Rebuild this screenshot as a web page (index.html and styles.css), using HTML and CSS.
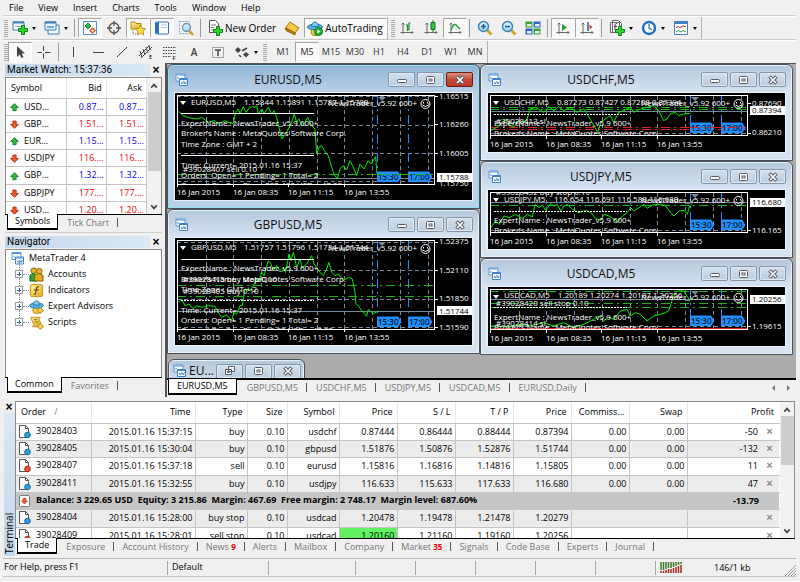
FILE: index.html
```html
<!DOCTYPE html>
<html lang="en">
<head>
<meta charset="utf-8">
<title>MetaTrader 4</title>
<link rel="stylesheet" href="styles.css">
</head>
<body>
<svg class="defs" aria-hidden="true">
  <defs>
    <linearGradient id="gold" x1="0" y1="0" x2="1" y2="1"><stop offset="0" stop-color="#fff3a0"/><stop offset="1" stop-color="#e0a818"/></linearGradient>
    <linearGradient id="lens" x1="0" y1="0" x2="0" y2="1"><stop offset="0" stop-color="#eaf6ff"/><stop offset="1" stop-color="#9fcdf0"/></linearGradient>
    <symbol id="i-plus" viewBox="0 0 10 10"><path d="M3.5.5h3v3h3v3h-3v3h-3v-3h-3v-3h3z" fill="#2fd42f" stroke="#0b8a12"/></symbol>
    <symbol id="i-up" viewBox="0 0 10 10"><path d="M5 .7 9.3 5H6.8v3.5H3.2V5H.7z" fill="#35b84a" stroke="#137a25"/></symbol>
    <symbol id="i-down" viewBox="0 0 10 10"><path d="M5 9.3 9.3 5H6.8V1.2H3.2V5H.7z" fill="#ee5a2c" stroke="#a92c0c"/></symbol>
    <symbol id="i-chart" viewBox="0 0 14 14"><path d="M1 1h9v7H1z" fill="#fff" stroke="#5a96d8"/><path d="M1 2h9" stroke="#5a96d8"/><path d="M4.5 5.500h8v7h-8z" fill="#fff" stroke="#3f82cf"/><path d="M4.500 6.500h8" stroke="#3f82cf"/><path d="M6 9l1.300 2 1.500-2.500 1.200 2.500L11.500 8.500M3 4v2" stroke="#3f82cf" fill="none"/></symbol>
    <symbol id="i-doc-buy" viewBox="0 0 14 14"><path d="M1.500.5h6l3 3v9h-9z" fill="#fff" stroke="#555"/><path d="M7.500.5v3h3" fill="none" stroke="#555"/><circle cx="9.500" cy="10" r="2.800" fill="#2ea0e6" stroke="#12659c"/></symbol>
    <symbol id="i-doc-sell" viewBox="0 0 14 14"><path d="M1.500.5h6l3 3v9h-9z" fill="#fff" stroke="#555"/><path d="M7.500.5v3h3" fill="none" stroke="#555"/><circle cx="9.500" cy="10" r="2.800" fill="#e8502a" stroke="#96280c"/></symbol>
    <symbol id="i-axes" viewBox="0 0 16 16"><path d="M4 3v11M1.500 12.500H14M2.500 4.500 4 3l1.500 1.500M12.500 11 14 12.500 12.500 14" fill="none" stroke="#666"/></symbol>
    <symbol id="i-hat" viewBox="0 0 16 16"><ellipse cx="8" cy="12" rx="4" ry="3.500" fill="#f3cf4b" stroke="#a87f10"/><ellipse cx="8" cy="7" rx="7.500" ry="2.800" fill="#5bb1e0" stroke="#2475a8"/><path d="M4.500 6.500Q5 2 8 2t3.500 4.500z" fill="#7cc8ee" stroke="#2475a8"/></symbol>
    <symbol id="i-grid" viewBox="0 0 297 95">
      <path d="M31.500 3v90M58.500 3v90M86.500 3v90M114.500 3v90M142.500 3v90M169.500 3v90M197.500 3v90M225.500 3v90M253.500 3v90" stroke="#778899" stroke-dasharray="4 3"/>
    </symbol>
    <symbol id="i-flags" viewBox="0 0 60 12">
      <path d="M0 .5h21l3.500 5.500-3.500 5H0zM31 .5h21l3.500 5.500-3.500 5H31z" fill="#1e90ff"/>
      <text x="1" y="9" class="flag">15:30</text><text x="32" y="9" class="flag">17:00</text>
    </symbol>
    <symbol id="i-head" viewBox="0 0 297 20">
      <path d="M5 8h6l-3 4z" fill="#fff"/><path d="M203 4h8l-4 4z" fill="#778899"/>
      <text x="153" y="13" class="lbl">NewsTrader_v5.92 600+</text>
      <circle cx="250.500" cy="11" r="4.500" fill="none" stroke="#fff"/><path d="M248.500 9v1.500M252.500 9v1.500M247.500 12q3 3 6 0" fill="none" stroke="#fff"/>
    </symbol>
    <symbol id="i-dates" viewBox="0 0 297 20">
      <path d="M2.500 0v3M58.500 0v3M113.500 0v3M169.500 0v3" stroke="#fff"/>
      <text x="2" y="11" class="lbl">16 Jan 2015</text><text x="58" y="11" class="lbl">16 Jan 08:35</text><text x="113" y="11" class="lbl">16 Jan 11:15</text><text x="169" y="11" class="lbl">16 Jan 13:55</text>
    </symbol>
    <clipPath id="clip-tall"><path d="M0 2h260v89H0z"/></clipPath>
    <clipPath id="clip-short"><path d="M0 2h260v41H0z"/></clipPath>
    <symbol id="i-min" viewBox="0 0 12 10"><rect x="1.500" y="4.500" width="9" height="3" rx="1" fill="#fff" stroke="#555a68"/></symbol>
    <symbol id="i-max" viewBox="0 0 12 10"><rect x="1.500" y="1.500" width="8" height="7" rx="1" fill="#fff" stroke="#555a68"/><rect x="4" y="4" width="3" height="2" fill="#fff" stroke="#555a68"/></symbol>
    <symbol id="i-close" viewBox="0 0 12 10"><path d="M2.500 1.500 9.500 8.500M9.500 1.500 2.500 8.500" stroke="#555a68" stroke-width="3.600"/><path d="M3 2 9 8M9 2 3 8" stroke="#fff" stroke-width="1.700"/></symbol>
  </defs>
</svg>

<div class="app">
  <nav class="menu">
    <button>File</button><button>View</button><button>Insert</button><button>Charts</button><button>Tools</button><button>Window</button><button>Help</button>
  </nav>

  <div class="bar bar-main">
    <span class="grip"></span>
    <button class="tb wide" aria-label="New chart"><svg viewBox="0 0 16 16"><path d="M1 2h11v8H1z" fill="#fff" stroke="#3c7cba"/><path d="M1 2.500h11" stroke="#3c7cba" stroke-width="2"/><path d="M3 6.500h7" stroke="#78a8d8"/><use href="#i-plus" x="6" y="5" width="10" height="10"/></svg><i class="caret"></i></button>
    <button class="tb wide" aria-label="Profiles"><svg viewBox="0 0 16 16"><path d="M4 5h11v9H4z" fill="#fff" stroke="#3c7cba"/><path d="M1 2h11v8H1z" fill="#eaf3fc" stroke="#3c7cba"/><path d="M1 2.500h11" stroke="#3c7cba" stroke-width="2"/><path d="M3 7h7" stroke="#78a8d8" stroke-width="2"/></svg><i class="caret"></i></button>
    <span class="sep"></span>
    <button class="tb on" aria-label="Market Watch"><svg viewBox="0 0 16 16"><path d="M1.500 1.500h13v13h-13z" fill="#fff" stroke="#4d94d6"/><path d="m6 3 3 3-3 3-3-3z" fill="#3bb64c" stroke="#1b7c2b"/><path d="m10.500 8 2.500 2.500-2.500 2.500L8 10.500z" fill="#fff" stroke="#e0582c" stroke-width="1.500"/></svg></button>
    <button class="tb" aria-label="Data Window"><svg viewBox="0 0 16 16"><circle cx="8" cy="8" r="5" fill="none" stroke="#555" stroke-width="1.400"/><path d="M8 1v5M8 10v5M1 8h5M10 8h5" stroke="#555" stroke-width="1.300"/></svg></button>
    <button class="tb on" aria-label="Navigator"><svg viewBox="0 0 16 16"><path d="M1 2h4l1 1.500h5V9H1z" fill="url(#gold)" stroke="#b98c17"/><path d="M3 10v4h3" fill="none" stroke="#777" stroke-dasharray="1 1"/><path d="m10.500 5 1.600 3.300 3.600.5-2.600 2.500.6 3.600-3.200-1.700-3.200 1.700.6-3.600L5.300 8.800l3.600-.5z" fill="#ffdc45" stroke="#a97c10" stroke-width=".8"/></svg></button>
    <button class="tb on" aria-label="Terminal"><svg viewBox="0 0 16 16"><rect x="1.500" y="2" width="13" height="12" rx="1" fill="#fff" stroke="#2a72bf"/><path d="M2 2.500h3v11H2z" fill="#2a72bf"/><path d="M7 5h6M7 7.500h6" stroke="#a9c8e8"/></svg></button>
    <button class="tb" aria-label="Strategy Tester"><svg viewBox="0 0 16 16"><path d="M1.500 1.500h10v12h-10z" fill="#f4f8fc" stroke="#8ca5bd" stroke-dasharray="2 1"/><circle cx="8.500" cy="7.500" r="4" fill="url(#lens)" stroke="#6d8da9" stroke-width="1.300"/><path d="m11.500 11 3.500 4" stroke="#d79a20" stroke-width="2.500"/></svg></button>
    <span class="sep"></span>
    <button class="tb text"><svg viewBox="0 0 16 16"><path d="M2.500.5h6l3 3v9h-9z" fill="#fff" stroke="#555"/><path d="M4 5h5M4 7.500h3M4 10h3" stroke="#777"/><use href="#i-plus" x="6" y="6" width="10" height="10"/></svg>New Order</button>
    <button class="tb" aria-label="MetaEditor"><svg viewBox="0 0 16 16"><path d="m6 2 9 6-4 5-9.500-5z" fill="#f5c945" stroke="#a8740f"/><path d="m1.500 8 .5 2.500L11 15v-2z" fill="#c98a14" stroke="#8e5f09"/></svg></button>
    <button class="tb text on"><svg viewBox="0 0 16 16"><use href="#i-hat" width="16" height="16"/><circle cx="11.500" cy="11.500" r="4" fill="#1fb52c" stroke="#0a7a16"/><path d="M10.300 9.500v4l3.200-2z" fill="#fff"/></svg>AutoTrading</button>
    <span class="edge"></span><span class="grip"></span>
    <button class="tb" aria-label="Bar chart"><svg viewBox="0 0 16 16"><use href="#i-axes" width="16" height="16"/><path d="M8.500 11V5H7M8.500 9.500H10V3h1.500" fill="none" stroke="#1d8d2c" stroke-width="1.200"/></svg></button>
    <button class="tb" aria-label="Candlesticks"><svg viewBox="0 0 16 16"><use href="#i-axes" width="16" height="16"/><path d="M10 0v12" stroke="#167421"/><path d="M8 2.500h4v7H8z" fill="#35c648" stroke="#167421"/></svg></button>
    <button class="tb on" aria-label="Line chart"><svg viewBox="0 0 16 16"><use href="#i-axes" width="16" height="16"/><path d="M4 10q3-8 5.500-4.500L13 9" fill="none" stroke="#1d9a2e" stroke-width="1.300"/></svg></button>
    <span class="sep"></span>
    <button class="tb" aria-label="Zoom in"><svg viewBox="0 0 16 16"><path d="m10 10 4.500 4.500" stroke="#d9a32c" stroke-width="3"/><circle cx="6.500" cy="6.500" r="5" fill="url(#lens)" stroke="#3a83bd" stroke-width="1.500"/><path d="M4 6.500h5M6.500 4v5" stroke="#1c5f9c" stroke-width="1.600"/></svg></button>
    <button class="tb" aria-label="Zoom out"><svg viewBox="0 0 16 16"><path d="m10 10 4.500 4.500" stroke="#d9a32c" stroke-width="3"/><circle cx="6.500" cy="6.500" r="5" fill="url(#lens)" stroke="#3a83bd" stroke-width="1.500"/><path d="M4 6.500h5" stroke="#1c5f9c" stroke-width="1.600"/></svg></button>
    <button class="tb" aria-label="Tile windows"><svg viewBox="0 0 16 16"><path d="M.5 1.500h7v6h-7zM8.500 8.500h7v6h-7z" fill="#3ba33b"/><path d="M8.500 1.500h7v6h-7zM.5 8.500h7v6h-7z" fill="#2c63c8"/><path d="M2 4h4.500v2.500H2zM10 4h4.500v2.500H10zM2 11h4.500v2.500H2zM10 11h4.500v2.500H10z" fill="#e6f2e6"/></svg></button>
    <span class="sep"></span>
    <button class="tb on" aria-label="Auto scroll"><svg viewBox="0 0 16 16"><use href="#i-axes" width="16" height="16"/><path d="m7 4 5 3.500L7 11z" fill="#22a533"/></svg></button>
    <button class="tb on" aria-label="Chart shift"><svg viewBox="0 0 16 16"><use href="#i-axes" width="16" height="16"/><path d="M9 2v9" stroke="#1d5f9e" stroke-width="1.500"/><path d="m13.500 7-3-2.500v5z" fill="#d04a20"/></svg></button>
    <span class="sep"></span>
    <button class="tb wide" aria-label="Indicators"><svg viewBox="0 0 16 16"><path d="M1.500 2.500h9v10h-9zM3.500.5h6l3 3v9h-9z" fill="#fff" stroke="#666"/><path d="M6 10V5q0-1.500 2-1.500M5 6.500h3" fill="none" stroke="#444"/><use href="#i-plus" x="6" y="6" width="10" height="10"/></svg><i class="caret"></i></button>
    <button class="tb wide" aria-label="Periods"><svg viewBox="0 0 16 16"><circle cx="8" cy="8" r="6" fill="#f4faff" stroke="#1d6fc4" stroke-width="2.400"/><path d="M8 4v4.500l3 1" fill="none" stroke="#345"/></svg><i class="caret"></i></button>
    <button class="tb wide" aria-label="Templates"><svg viewBox="0 0 16 16"><path d="M1.500 1.500h13v13h-13z" fill="#fff" stroke="#3f82c9"/><path d="M2 3h12" stroke="#3f82c9" stroke-width="2"/><path d="m3 7.500 2-1 2 1 3-1.500 3 .5" fill="none" stroke="#a33"/><path d="m3 12 2.500-1.500L8 12l2-1.500 3 1.500" fill="none" stroke="#2a8c35"/></svg><i class="caret"></i></button>
    <span class="edge"></span>
  </div>

  <div class="bar bar-draw">
    <span class="grip"></span>
    <button class="tb on" aria-label="Cursor"><svg viewBox="0 0 16 16"><path d="M5 2v11l2.700-2.500L9.500 14l2-1-1.800-3.500H13z" fill="#444"/></svg></button>
    <button class="tb" aria-label="Crosshair"><svg viewBox="0 0 16 16"><path d="M7.500 2v5M7.500 9.500v5M1.500 8.500H6M9 8.500h5.500" stroke="#444"/></svg></button>
    <span class="sep"></span>
    <button class="tb" aria-label="Vertical line"><svg viewBox="0 0 16 16"><path d="M7.500 3v10" stroke="#444"/></svg></button>
    <button class="tb" aria-label="Horizontal line"><svg viewBox="0 0 16 16"><path d="M3 8.500h11" stroke="#444"/></svg></button>
    <button class="tb" aria-label="Trend line"><svg viewBox="0 0 16 16"><path d="m3 13 10-10" stroke="#444"/></svg></button>
    <button class="tb" aria-label="Channel"><svg viewBox="0 0 16 16"><path d="M1 12 11 2M3 14 14 3M2 7l2 6M5 5l2 6M8 3l2 6M11 1l1 5" fill="none" stroke="#444"/><text x="11" y="15" class="tiny">E</text></svg></button>
    <button class="tb" aria-label="Fibonacci"><svg viewBox="0 0 16 16"><path d="M1 3.500h13M1 6.500h13M1 9.500h13M1 12.500h8" stroke="#444" stroke-dasharray="1.500 1"/><text x="10.500" y="15.500" class="tiny">F</text></svg></button>
    <button class="tb letter">A</button>
    <button class="tb" aria-label="Text label"><svg viewBox="0 0 16 16"><path d="M2.500 3.500h11v10h-11z" fill="none" stroke="#555" stroke-dasharray="1 1"/><path d="M5 6h6M8 6v6" stroke="#444" stroke-width="1.500"/></svg></button>
    <button class="tb wide" aria-label="Arrows"><svg viewBox="0 0 16 16"><path d="m4 3 3 3-3 3-3-3zM12 8l3 2.500-3 3-3-3z" fill="#444"/><path d="m5 11 2 2M8 7l5-3" stroke="#444" stroke-width="1.500"/></svg><i class="caret"></i></button>
    <span class="grip grip-per"></span>
    <button class="tb per">M1</button><button class="tb per on">M5</button><button class="tb per">M15</button><button class="tb per">M30</button><button class="tb per">H1</button><button class="tb per">H4</button><button class="tb per">D1</button><button class="tb per">W1</button><button class="tb per">MN</button>
    <span class="edge"></span>
  </div>

  <div class="work">
    <aside class="side">
      <section class="panel">
        <header class="cap"><h2>Market Watch: 15:37:36</h2><button aria-label="Close Market Watch">×</button></header>
        <div class="scrollbox watch">
          <div class="clip">
            <table class="quotes">
              <thead><tr><th>Symbol</th><th>Bid</th><th>Ask</th></tr></thead>
              <tbody>
                <tr class="up"><td><svg><use href="#i-up"/></svg>USD...</td><td>0.87...</td><td>0.87...</td></tr>
                <tr class="down"><td><svg><use href="#i-down"/></svg>GBP...</td><td>1.51...</td><td>1.51...</td></tr>
                <tr class="up"><td><svg><use href="#i-up"/></svg>EUR...</td><td>1.15...</td><td>1.15...</td></tr>
                <tr class="down"><td><svg><use href="#i-down"/></svg>USDJPY</td><td>116....</td><td>116....</td></tr>
                <tr class="up"><td><svg><use href="#i-up"/></svg>GBP...</td><td>1.32...</td><td>1.32...</td></tr>
                <tr class="down"><td><svg><use href="#i-down"/></svg>GBPJPY</td><td>177....</td><td>177....</td></tr>
                <tr class="down"><td><svg><use href="#i-down"/></svg>USD...</td><td>1.20...</td><td>1.20...</td></tr>
              </tbody>
            </table>
          </div>
          <div class="scroll"><i class="arr up-a"></i><i class="thumb"></i><i class="arr down-a"></i></div>
        </div>
        <div class="tabs"><button class="sel">Symbols</button><button>Tick Chart</button></div>
      </section>
      <section class="panel nav">
        <header class="cap"><h2>Navigator</h2><button aria-label="Close Navigator">×</button></header>
        <ul class="tree">
          <li class="root"><svg><use href="#i-chart"/></svg>MetaTrader 4</li>
          <li><i class="exp"></i><svg viewBox="0 0 16 16"><circle cx="5" cy="4" r="3" fill="#e8b52a" stroke="#7e5c08"/><circle cx="11" cy="4.500" r="3" fill="#e8b52a" stroke="#7e5c08"/><path d="M1 15V9q4-4 7 0v6z" fill="#25a935" stroke="#0c6b18"/><path d="M6 15V9q4-4 9 0v6z" fill="#e0aa22" stroke="#7e5c08"/></svg>Accounts</li>
          <li><i class="exp"></i><svg viewBox="0 0 16 16"><rect x="1.500" y="1.500" width="13" height="13" rx="1.500" fill="url(#gold)" stroke="#c1911c"/><path d="M10.500 4Q8.500 3.500 8 6l-1 5q-.5 1.500-2 1M5.500 7.500h5" fill="none" stroke="#5a4308" stroke-width="1.200"/></svg>Indicators</li>
          <li><i class="exp"></i><svg viewBox="0 0 16 16"><use href="#i-hat" width="16" height="16"/><path d="m12 9 3.500 3.300L12 15.500l-3.300-3.200z" fill="#f6cf48" stroke="#a97c10"/></svg>Expert Advisors</li>
          <li><i class="exp"></i><svg viewBox="0 0 16 16"><path d="M2 2.500h10q-2 2 0 5t-1 5H4q2-2 0-5t-2-5z" fill="url(#gold)" stroke="#b98c17"/><path d="M5 5h4M6 7.500h4" stroke="#8a6a12"/><path d="m12 9 3.500 3.300L12 15.500l-3.300-3.200z" fill="#f6cf48" stroke="#a97c10"/></svg>Scripts</li>
        </ul>
        <div class="tabs"><button class="sel">Common</button><button>Favorites</button></div>
      </section>
    </aside>

    <main class="mdi">
      <div class="desk">
        <div class="col">
          <section class="win active">
            <header class="title"><svg><use href="#i-chart"/></svg><h3>EURUSD,M5</h3><button aria-label="Minimize"><svg><use href="#i-min"/></svg></button><button aria-label="Maximize"><svg><use href="#i-max"/></svg></button><button class="x" aria-label="Close"><svg><use href="#i-close"/></svg></button></header>
            <svg class="chart tall" viewBox="0 0 297 107" preserveAspectRatio="xMinYMin slice">
              <use href="#i-grid" width="297" height="95"/>
              <path d="M2 3.500h258M2 32.500h258M2 60.500h258M2 88.500h258" class="grid"/>
              <path d="M202.500 3v88M233.500 3v88" class="session"/>
              <path d="M2 85.500h258" stroke="#778899"/><path d="M2 81.500h258" class="order"/>
              <g transform="translate(-10 -29) scale(.3333)"><polyline class="price" points="40,142 55,155 75,162 95,165 110,160 130,175 150,170 160,180 180,170 195,178 205,178 212,145 220,135 225,148 235,128 243,145 255,130 262,128 270,130 275,125 280,150 290,135 297,148 310,130 320,150 328,140 335,160 342,190 350,225 357,215 362,210 370,195 378,180 388,150 395,175 402,165 410,185 420,175 428,160 440,185 450,195 455,270 462,250 470,245 478,260 490,275 500,310 507,330 517,345 525,315 535,305 545,318 555,290 563,305 575,335 585,300 597,315 610,290 618,300 632,278 636,330"/></g>
              <path d="M6 20.500h133M6 62.500h133" stroke="#fff"/>
              <g class="lbl" clip-path="url(#clip-tall)"><text x="16" y="12">EURUSD,M5</text><text x="69" y="12">1.15844 1.15891 1.15787 1.15788</text><text x="6" y="33">ExpertName : NewsTrader_v5.9 600+</text><text x="6" y="43">Broker's Name :  MetaQuotes Software Corp.</text><text x="6" y="54">Time Zone : GMT + 2</text><text x="6" y="75">Time: Current= 2015.01.16 15:37</text><text x="8" y="79">#39028407 sell 0.10</text><text x="6" y="85">Orders: Open= 1 Pending= 1 Total= 2</text><text x="6" y="95">Current Pip Cur. Pips= 282.460 USD = 47.38</text></g>
              <use href="#i-flags" x="202" y="78" width="60" height="12"/>
              <path d="M202 81.500h58" class="order"/>
              <use href="#i-head" width="297" height="20"/>
              <rect x="2.500" y="2.500" width="257" height="89" class="frame"/>
              <g class="lbl"><text x="264" y="6">1.16515</text><text x="264" y="34">1.16260</text><text x="264" y="63">1.16005</text><text x="264" y="93">1.15750</text></g>
              <path d="M260 3.500h3M260 31.500h3M260 60.500h3" stroke="#fff"/>
              <path d="M262 80h35v9h-35z" fill="#fff"/><text x="264" y="87" class="now">1.15788</text>
              <use href="#i-dates" y="91" width="297" height="20"/>
            </svg>
          </section>
          <section class="win">
            <header class="title"><svg><use href="#i-chart"/></svg><h3>GBPUSD,M5</h3><button aria-label="Minimize"><svg><use href="#i-min"/></svg></button><button aria-label="Maximize"><svg><use href="#i-max"/></svg></button><button aria-label="Close"><svg><use href="#i-close"/></svg></button></header>
            <svg class="chart tall" viewBox="0 0 297 107" preserveAspectRatio="xMinYMin slice">
              <use href="#i-grid" width="297" height="95"/>
              <path d="M2 4.500h258M2 32.500h258M2 61.500h258M2 89.500h258" class="grid"/>
              <path d="M202.500 3v88M233.500 3v88" class="session"/>
              <path d="M2 73.500h258" stroke="#778899"/><path d="M2 47.500h258M2 58.500h258" class="order"/>
              <g transform="translate(-10 -29) scale(.3333)"><polyline class="price" points="40,280 50,270 60,290 72,285 85,300 95,290 110,295 130,290 150,292 160,310 170,325 185,318 200,335 207,310 215,315 225,290 232,290 240,240 255,245 265,230 275,210 282,218 290,190 297,200 310,155 318,165 325,185 335,170 345,185 355,175 362,190 372,135 378,155 385,130 395,175 405,150 412,178 425,165 440,140 447,165 455,175 465,190 475,200 485,180 492,160 500,190 510,200 520,195 535,215 550,205 562,210 570,250 573,285 580,290 590,305 605,322 610,300 625,315 640,305"/></g>
              <path d="M6 21.500h133" stroke="#fff"/><path d="M6 62.500h133" stroke="#fff" stroke-dasharray="2 1"/>
              <g class="lbl" clip-path="url(#clip-tall)"><text x="16" y="12">GBPUSD,M5</text><text x="69" y="12">1.51757 1.51796 1.51734 1.51744</text><text x="6" y="33">ExpertName : NewsTrader_v5.9 600+</text><text x="6" y="44">Broker's Name :  MetaQuotes Software Corp.</text><text x="8" y="44">#39028415 buy stop 0.10</text><text x="6" y="54">Time Zone : GMT + 2</text><text x="8" y="56">#39028405 buy 0.10</text><text x="6" y="75">Time: Current= 2015.01.16 15:37</text><text x="6" y="85">Orders: Open= 1 Pending= 1 Total= 2</text><text x="6" y="95">Current Pip Cur. Pips= 42.80 USD = 47.38</text></g>
              <use href="#i-flags" x="202" y="78" width="60" height="12"/>
              <use href="#i-head" width="297" height="20"/>
              <rect x="2.500" y="2.500" width="257" height="89" class="frame"/>
              <g class="lbl"><text x="264" y="6">1.52375</text><text x="264" y="35">1.52110</text><text x="264" y="63">1.51850</text><text x="264" y="92">1.51590</text></g>
              <path d="M260 4.500h3M260 32.500h3M260 61.500h3M260 89.500h3" stroke="#fff"/>
              <path d="M262 68h35v9h-35z" fill="#fff"/><text x="264" y="76" class="now">1.51744</text>
              <use href="#i-dates" y="91" width="297" height="20"/>
            </svg>
          </section>
          <section class="win iconic">
            <header class="title"><svg><use href="#i-chart"/></svg><h3>EU...</h3><button aria-label="Restore"><svg viewBox="0 0 12 10"><path d="M4.500.5h6v5h-6zM1.500 3.500h6v5h-6z" fill="#fff" stroke="#555a68"/><path d="M3.500 5.500h2v1h-2z" fill="none" stroke="#555a68"/></svg></button><button aria-label="Maximize"><svg><use href="#i-max"/></svg></button><button aria-label="Close"><svg><use href="#i-close"/></svg></button></header>
          </section>
        </div>
        <div class="col">
          <section class="win">
            <header class="title"><svg><use href="#i-chart"/></svg><h3>USDCHF,M5</h3><button aria-label="Minimize"><svg><use href="#i-min"/></svg></button><button aria-label="Maximize"><svg><use href="#i-max"/></svg></button><button aria-label="Close"><svg><use href="#i-close"/></svg></button></header>
            <svg class="chart" viewBox="0 0 297 59" preserveAspectRatio="xMinYMin slice">
              <g clip-path="url(#clip-short)"><use href="#i-grid" width="297" height="95"/><path d="M202.500 3v88M233.500 3v88" class="session"/></g>
              <path d="M2 40.500h258" class="grid"/><path d="M2 18.500h258" stroke="#778899"/>
              <path d="M2 14.500h258M2 16.500h258" class="order"/><path d="M2 34.500h258M2 36.500h258" class="order stop"/>
              <g transform="translate(-11 -29) scale(.3333)"><polyline class="price" points="40,200 60,190 75,175 90,165 100,185 110,190 125,170 135,180 150,165 160,135 175,130 200,145 215,128 230,140 245,128 260,140 280,130 300,145 320,135 330,150 345,175 362,205 372,175 385,165 400,155 410,175 425,145 440,140 460,130 470,145 490,135 510,130 530,125 545,140 560,170 570,165 580,150 595,145 605,155 620,150 640,148"/></g>
              <path d="M6 21.500h133" stroke="#fff" stroke-dasharray="2 1"/>
              <g class="lbl" clip-path="url(#clip-short)"><text x="16" y="12">USDCHF,M5</text><text x="69" y="12">0.87273 0.87427 0.87208 0.87394</text><text x="8" y="31">#39028413 sl</text><text x="6" y="33">ExpertName : NewsTrader_v5.9 600+</text><text x="6" y="43">Broker's Name :  MetaQuotes Software Corp.</text></g>
              <use href="#i-flags" x="202" y="29" width="60" height="12"/>
              <path d="M202 34.500h58" class="order stop"/>
              <use href="#i-head" width="297" height="20"/>
              <rect x="2.500" y="2.500" width="257" height="40" class="frame"/>
              <g class="lbl"><text x="264" y="13">0.87690</text><text x="264" y="42">0.86210</text></g>
              <path d="M260 10.500h3M260 40.500h3" stroke="#fff"/>
              <path d="M262 13h35v9h-35z" fill="#fff"/><text x="264" y="20" class="now">0.87394</text>
              <use href="#i-dates" y="43" width="297" height="20"/>
            </svg>
          </section>
          <section class="win">
            <header class="title"><svg><use href="#i-chart"/></svg><h3>USDJPY,M5</h3><button aria-label="Minimize"><svg><use href="#i-min"/></svg></button><button aria-label="Maximize"><svg><use href="#i-max"/></svg></button><button aria-label="Close"><svg><use href="#i-close"/></svg></button></header>
            <svg class="chart" viewBox="0 0 297 59" preserveAspectRatio="xMinYMin slice">
              <g clip-path="url(#clip-short)"><use href="#i-grid" width="297" height="95"/><path d="M202.500 3v88M233.500 3v88" class="session"/></g>
              <path d="M2 40.500h258" class="grid"/><path d="M2 12.500h258" stroke="#778899"/>
              <path d="M2 15.500h258" class="order"/>
              <g transform="translate(-9 -9) scale(.3333)"><polyline class="price" points="35,140 50,120 60,130 75,105 90,110 110,100 130,112 145,100 160,108 168,70 180,80 190,72 200,88 215,68 225,75 235,70 245,90 255,75 265,70 280,85 300,95 320,88 335,95 350,112 365,118 375,100 390,105 405,115 415,125 430,105 445,95 455,80 465,90 480,80 495,70 505,82 520,72 545,70 560,75 575,95 585,105 600,90 615,88 625,100 632,75 640,68"/></g>
              <path d="M6 21.500h133" stroke="#fff" stroke-dasharray="2 1"/>
              <g class="lbl" clip-path="url(#clip-short)"><text x="8" y="5">#39028432 buy stop 0.10</text><text x="16" y="12">USDJPY,M5</text><text x="66" y="12">116.654 116.691 116.588 116.680</text><text x="6" y="33">ExpertName : NewsTrader_v5.9 600+</text><text x="6" y="43">Broker's Name :  MetaQuotes Software Corp.</text></g>
              <use href="#i-flags" x="202" y="29" width="60" height="12"/>
              <use href="#i-head" width="297" height="20"/>
              <rect x="2.500" y="2.500" width="257" height="40" class="frame"/>
              <g class="lbl"><text x="264" y="43">116.165</text></g>
              <path d="M260 40.500h3" stroke="#fff"/>
              <path d="M262 8h35v9h-35z" fill="#fff"/><text x="264" y="15" class="now">116.680</text>
              <use href="#i-dates" y="43" width="297" height="20"/>
            </svg>
          </section>
          <section class="win">
            <header class="title"><svg><use href="#i-chart"/></svg><h3>USDCAD,M5</h3><button aria-label="Minimize"><svg><use href="#i-min"/></svg></button><button aria-label="Maximize"><svg><use href="#i-max"/></svg></button><button aria-label="Close"><svg><use href="#i-close"/></svg></button></header>
            <svg class="chart" viewBox="0 0 297 59" preserveAspectRatio="xMinYMin slice">
              <g clip-path="url(#clip-short)"><use href="#i-grid" width="297" height="95"/><path d="M202.500 3v88M233.500 3v88" class="session"/></g>
              <path d="M2 39.500h258" class="grid"/><path d="M2 12.500h258" stroke="#778899"/>
              <path d="M2 4.500h258M2 16.500h258M2 20.500h258" class="order"/><path d="M2 41.500h258" stroke="#e02020"/>
              <g transform="translate(-11 -76) scale(.3333)"><polyline class="price" points="40,345 60,345 90,348 130,340 160,345 200,335 230,345 260,335 290,350 320,340 350,325 365,315 380,330 395,318 410,325 430,300 450,295 460,315 475,305 490,310 510,330 530,315 550,310 565,305 575,300 582,280 587,260 600,240 620,240 640,270"/></g>
              <path d="M6 20.500h133" stroke="#fff" stroke-dasharray="2 1"/>
              <g class="lbl" clip-path="url(#clip-short)"><text x="16" y="11">USDCAD,M5</text><text x="70" y="11">1.20189 1.20274 1.20187 1.20256</text><text x="8" y="19">#39028420 sell stop 0.10</text><text x="6" y="33">ExpertName : NewsTrader_v5.9 600+</text><text x="8" y="39">#39028414 sl</text><text x="6" y="43">Broker's Name :  MetaQuotes Software Corp.</text></g>
              <use href="#i-flags" x="202" y="28" width="60" height="12"/>
              <use href="#i-head" width="297" height="20"/>
              <rect x="2.500" y="2.500" width="257" height="40" class="frame"/>
              <g class="lbl"><text x="264" y="42">1.19615</text></g>
              <path d="M260 39.500h3" stroke="#fff"/>
              <path d="M262 8h35v9h-35z" fill="#fff"/><text x="264" y="15" class="now">1.20256</text>
              <use href="#i-dates" y="43" width="297" height="20"/>
            </svg>
          </section>
        </div>
      </div>
      <div class="tabs charts"><button class="sel">EURUSD,M5</button><button>GBPUSD,M5</button><button>USDCHF,M5</button><button>USDJPY,M5</button><button>USDCAD,M5</button><button>EURUSD,Daily</button><span class="pager"><i class="left"></i><i class="right"></i></span></div>
    </main>
  </div>

  <section class="terminal">
    <header class="rail"><button aria-label="Close Terminal">×</button><h2>Terminal</h2></header>
    <div class="term-body">
      <div class="scrollbox">
        <div class="clip">
          <table class="orders">
            <colgroup><col class="c-order"><col class="c-time"><col class="c-type"><col class="c-size"><col class="c-sym"><col class="c-num"><col class="c-num"><col class="c-num"><col class="c-num"><col class="c-num"><col class="c-num"><col class="c-profit"></colgroup>
            <thead><tr><th>Order <i class="slash">/</i></th><th>Time</th><th>Type</th><th>Size</th><th>Symbol</th><th>Price</th><th>S / L</th><th>T / P</th><th>Price</th><th>Commiss...</th><th>Swap</th><th>Profit</th></tr></thead>
            <tbody>
              <tr><td><svg><use href="#i-doc-buy"/></svg>39028403</td><td>2015.01.16 15:37:15</td><td>buy</td><td>0.10</td><td>usdchf</td><td>0.87444</td><td>0.86444</td><td>0.88444</td><td>0.87394</td><td>0.00</td><td>0.00</td><td>-50<button aria-label="Close order">×</button></td></tr>
              <tr class="alt"><td><svg><use href="#i-doc-buy"/></svg>39028405</td><td>2015.01.16 15:30:04</td><td>buy</td><td>0.10</td><td>gbpusd</td><td>1.51876</td><td>1.50876</td><td>1.52876</td><td>1.51744</td><td>0.00</td><td>0.00</td><td>-132<button aria-label="Close order">×</button></td></tr>
              <tr><td><svg><use href="#i-doc-sell"/></svg>39028407</td><td>2015.01.16 15:37:18</td><td>sell</td><td>0.10</td><td>eurusd</td><td>1.15816</td><td>1.16816</td><td>1.14816</td><td>1.15805</td><td>0.00</td><td>0.00</td><td>11<button aria-label="Close order">×</button></td></tr>
              <tr class="alt"><td><svg><use href="#i-doc-buy"/></svg>39028411</td><td>2015.01.16 15:32:55</td><td>buy</td><td>0.10</td><td>usdjpy</td><td>116.633</td><td>115.633</td><td>117.633</td><td>116.680</td><td>0.00</td><td>0.00</td><td>47<button aria-label="Close order">×</button></td></tr>
              <tr class="balance"><td colspan="11"><svg viewBox="0 0 14 14"><rect x="1.500" y="1.500" width="10" height="11" rx="1" fill="#fff" stroke="#777"/><use href="#i-down" x="3" y="3.500" width="7" height="7"/></svg>Balance: 3 229.65 USD&nbsp; Equity: 3 215.86&nbsp; Margin: 467.69&nbsp; Free margin: 2 748.17&nbsp; Margin level: 687.60%</td><td>-13.79</td></tr>
              <tr class="alt"><td><svg><use href="#i-doc-buy"/></svg>39028404</td><td>2015.01.16 15:28:00</td><td>buy stop</td><td>0.10</td><td>usdcad</td><td>1.20478</td><td>1.19478</td><td>1.21478</td><td>1.20279</td><td colspan="2"></td><td><button aria-label="Delete order">×</button></td></tr>
              <tr><td><svg><use href="#i-doc-sell"/></svg>39028409</td><td>2015.01.16 15:28:01</td><td>sell stop</td><td>0.10</td><td>usdcad</td><td class="hit">1.20160</td><td>1.21160</td><td>1.19160</td><td>1.20256</td><td colspan="2"></td><td><button aria-label="Delete order">×</button></td></tr>
            </tbody>
          </table>
        </div>
        <div class="scroll"><i class="arr up-a"></i><i class="thumb"></i><i class="arr down-a"></i></div>
      </div>
      <div class="tabs"><button class="sel">Trade</button><button>Exposure</button><button>Account History</button><button>News <b>9</b></button><button>Alerts</button><button>Mailbox</button><button>Company</button><button>Market <b>35</b></button><button>Signals</button><button>Code Base</button><button>Experts</button><button>Journal</button></div>
    </div>
  </section>

  <footer class="status">
    <span class="help">For Help, press F1</span><span class="profile">Default</span><span class="s1"></span><span class="s2"></span><span class="s2"></span><span class="s2"></span><span class="s2"></span><span class="s2"></span>
    <span class="net"><svg class="signal" viewBox="0 0 22 11"><path d="M1 0v8M3.500 0v8M6 0v7M8.500 0v6M11 0v6M13.500 0v5M16 0v4M18.500 0v3M21 0v2" stroke="#3d7a2a" stroke-width="1.500"/><path d="M1 9v2M3.500 9v2M6 8v3M8.500 7v4M11 7v4M13.500 6v5M16 5v6M18.500 4v7M21 3v8" stroke="#a02a22" stroke-width="1.500"/></svg>146/1 kb</span>
    <svg class="resize" viewBox="0 0 12 12"><path d="M1 12 12 1M4 12l8-8M7 12l5-5M10 12l2-2" stroke="#999"/></svg>
  </footer>
</div>
</body>
</html>
```

FILE: styles.css
```css
* { box-sizing: border-box; }
body { margin: 0; background: #f0f0f0; color: #000; font: 9px/12px "Open Sans", "Noto Sans", sans-serif; }
button { font: inherit; color: inherit; background: none; border: 0; padding: 0; margin: 0; }
h2, h3 { margin: 0; font: inherit; }
i { font-style: normal; }
.defs { position: absolute; width: 0; height: 0; }
.app { display: flex; flex-direction: column; min-height: 100vh; padding: 0 4px 4px 3px; background: #f0f0f0; border-bottom: 3px solid #fafafa; }

/* menu and toolbars */
.menu { display: flex; gap: 15px; height: 16px; padding: 1px 0 0 6px; border-bottom: 1px solid #cfcfcf; }
.bar { display: flex; align-items: center; height: 24px; padding-left: 1px; border-top: 1px solid #fff; border-bottom: 1px solid #c9c9c9; }
.bar-draw { border-bottom: 0; height: 23px; }
.grip { width: 4px; height: 17px; flex: none; background: repeating-linear-gradient(#a8a8a8 0 1px, transparent 1px 2px); }
.grip-per { margin: 0 4px 0 1px; }
.sep { width: 1px; height: 18px; margin: 0 3px 0 2px; background: #9a9a9a; }
.edge { width: 1px; height: 22px; margin: 0 3px 0 0; background: #b4b4b4; }
.tb { display: flex; align-items: center; justify-content: center; width: 24px; height: 20px; border: 1px solid transparent; flex: none; }
.tb svg { width: 16px; height: 16px; flex: none; }
.tb.on { background: #f8f8f8; border-color: #a5a5a5 #fff #fff #a5a5a5; }
.tb.wide { width: 32px; gap: 4px; }
.tb.text { width: auto; padding: 0 3px 0 2px; gap: 2px; font-size: 10px; }
.tb.letter { color: #444; font-weight: 600; font-size: 10px; }
.tb.per { color: #333; }
.caret { width: 0; height: 0; border: 2px solid transparent; border-top: 3px solid #000; border-bottom: 0; }
.tiny { font: 600 6px "Open Sans", sans-serif; fill: #222; }

/* docked panels */
.work { display: flex; height: 334px; }
.side { display: flex; flex-direction: column; width: 161px; padding: 1px 2px 0 2px; }
.panel { display: flex; flex-direction: column; height: 168px; }
.nav { border-top: 1px solid #d0d0d0; padding-top: 3px; height: 163px; }
.cap { display: flex; justify-content: space-between; align-items: center; height: 12px; margin-bottom: 1px; }
.cap h2 { flex: 1; padding-left: 2px; font-size: 10px; font-family: Roboto, sans-serif; background: linear-gradient(90deg, #c3d8ec, #dbe8f4); }
.cap button, .rail button { width: 12px; font: 700 12px/12px "Liberation Sans", sans-serif; }
.scrollbox { display: flex; flex: 1; min-height: 0; overflow: hidden; background: #fff; border: 1px solid #8c8c8c; border-bottom: 0; }
.clip { flex: 1; min-width: 0; overflow: hidden; }
table { width: 100%; border-collapse: collapse; table-layout: fixed; }
td, th { padding: 0 2px; font-weight: 400; white-space: nowrap; overflow: hidden; text-align: right; border: solid #c4c4c4; border-width: 0 1px 1px 0; }
th { border-right-color: #dfe9f3; border-bottom-color: #c4c4c4; }
td:first-child, th:first-child { text-align: left; }
td svg { width: 14px; height: 14px; vertical-align: middle; margin-right: 4px; }
.quotes { height: 141px; }
.quotes thead tr { height: 20px; }
.quotes th:first-child { width: 60px; padding-left: 5px; }
.quotes th { padding-right: 4px; }
.quotes td:first-child { padding-left: 4px; }
.quotes td svg { width: 9px; height: 9px; margin-right: 5px; }
.up td:nth-child(n+2) { color: #0000f0; }
.down td:nth-child(n+2) { color: #f00000; }
.scroll { display: flex; flex-direction: column; align-items: center; width: 14px; background: #f2f2f2; }
.arr { width: 6px; height: 6px; margin: 5px 0; border: solid #444; border-width: 2px 0 0 2px; transform: rotate(45deg) scale(.8); }
.up-a { margin-top: 6px; margin-bottom: 2px; }
.down-a { border-width: 0 2px 2px 0; margin-top: auto; margin-bottom: 5px; }
.thumb { width: 13px; height: 79px; background: #cdcdcd; }
.tabs { display: flex; align-items: flex-start; height: 18px; padding-left: 2px; border-top: 1px solid #000; color: #777; }
.tabs button { position: relative; height: 15px; padding: 0 9px 0 8px; }
.tabs button:not(.sel)::after { content: ""; position: absolute; right: 0; top: 3px; width: 1px; height: 9px; background: #555; }
.tabs .sel { margin: -1px 1px 0 0; height: 16px; padding: 0 7px; color: #000; background: #fff; border: 1px solid #000; border-top: 0; border-bottom-width: 2px; }
.tabs b { color: #e00000; font-size: 8px; }
.tree { flex: 1; margin: 0; padding: 0 0 0 7px; list-style: none; background: #fff; border: 1px solid #8c8c8c; border-bottom: 0; }
.tree li { display: flex; align-items: center; height: 16px; }
.tree svg { width: 15px; height: 15px; margin-right: 4px; }
.tree .root svg { width: 14px; margin-left: -2px; }
.exp { position: relative; width: 8px; height: 8px; margin: 0 6px 0 2px; border: 1px solid #999; background: linear-gradient(#36c, #36c) center/4px 1px no-repeat, linear-gradient(#36c, #36c) center/1px 4px no-repeat, #fff; }
.exp::before { content: ""; position: absolute; left: 3px; top: -9px; height: 8px; border-left: 1px dotted #888; }
.exp::after { content: ""; position: absolute; left: 7px; top: 3px; width: 6px; border-top: 1px dotted #888; }

/* chart windows */
.mdi { display: flex; flex-direction: column; flex: 1; min-width: 0; margin-left: 1px; border-left: 2px solid #555; }
.desk { display: flex; flex: 1; align-items: flex-start; padding-right: 3px; background: #ababab; border-top: 1px solid #555; overflow: hidden; }
.col { flex: 1; min-width: 0; }
.win { padding: 0 6px 7px; border: 1px solid #4c5058; border-radius: 6px 6px 0 0; background: linear-gradient(#b4c7da, #d6e4f2 28px); box-shadow: inset 0 0 0 1px #e6f0fa; }
.win.active { background: linear-gradient(#93b4d4, #b9d1ea 28px); box-shadow: inset 0 0 0 1px #8fe0f5; }
.title { display: flex; align-items: center; height: 27px; gap: 2px; padding-top: 2px; }
.title > svg { width: 14px; height: 14px; margin-left: 1px; }
.title h3 { flex: 1; text-align: center; padding-right: 1px; font-size: 12px; line-height: 16px; color: #111; }
.title button { display: flex; align-items: center; justify-content: center; width: 27px; height: 15px; border: 1px solid #8695a8; border-radius: 2px; background: linear-gradient(#d3dfec, #bccddf); box-shadow: inset 0 0 0 1px #dce8f4; }
.title button svg { width: 12px; height: 10px; }
.title .x { background: linear-gradient(#dc8f80, #c24a35 50%, #c0392b); border-color: #6b2017; box-shadow: none; }
.chart { display: block; width: 100%; height: 61px; background: #000; border: 1px solid #eef4fa; }
.chart.tall { height: 109px; }
.iconic { width: 137px; margin: 5px 0 0 1px; padding: 0 3px; }
.iconic .title { height: 22px; padding-top: 0; }
.iconic .title h3 { padding: 0; }
.lbl { font: 8px "Open Sans", sans-serif; fill: #fff; }
.now { font: 8px "Open Sans", sans-serif; fill: #000; }
.flag { font: 600 8px "Open Sans", sans-serif; fill: #04182c; }
.grid { stroke: #778899; stroke-dasharray: 4 3; }
.session { stroke: #1e90ff; stroke-dasharray: 9 4 2 4; }
.order { stroke: #17b317; stroke-dasharray: 9 4 2 4; }
.stop { stroke: #e02020; }
.price { fill: none; stroke: #00f000; stroke-width: 3; }
.frame { fill: none; stroke: #fff; }
.charts { height: 19px; border-top: 2px solid #000; padding-left: 1px; }
.charts button { padding: 0 9px; }
.charts .sel { height: 16px; padding: 0 8px; }
.pager { display: flex; gap: 12px; margin: 5px 6px 0 auto; }
.pager i { border: 3px solid transparent; width: 0; height: 0; }
.pager .left { border-right-color: #777; border-left: 0; }
.pager .right { border-left-color: #777; border-right: 0; }

/* terminal */
.terminal { display: flex; margin-top: 4px; height: 155px; }
.rail { display: flex; flex-direction: column; align-items: center; width: 12px; }
.rail h2 { flex: 1; width: 11px; padding: 2px 0; writing-mode: vertical-rl; transform: rotate(180deg); font-size: 10px; line-height: 11px; background: linear-gradient(#c3d8ec, #dbe8f4); }
.term-body { display: flex; flex-direction: column; flex: 1; min-width: 0; margin-right: 1px; }
.orders { height: 143px; }
.orders thead tr { height: 21px; }
.orders th:first-child { padding-left: 5px; }
.orders th { padding-right: 4px; }
.orders th:last-child { padding-right: 5px; }
.orders .slash { margin-left: 6px; color: #777; }
.c-order { width: 75px; } .c-time { width: 104px; } .c-type { width: 52px; } .c-size { width: 40px; } .c-sym { width: 52px; } .c-num { width: 58px; }
.orders td button { width: 23px; margin-right: -4px; color: #888; font: 700 11px/10px "Liberation Sans", sans-serif; }
.orders tr > :last-child { border-right-color: transparent; }
.alt { background: #ececec; }
.balance { background: #c6c6c6; }
.balance td { border-color: #c6c6c6; font-weight: 700; }
.orders .balance td:last-child { padding-right: 20px; }
.hit { background: #62f162; }
.terminal .thumb { height: 49px; }

/* status bar */
.status { display: flex; align-items: center; height: 19px; margin-top: 2px; border-top: 1px solid #b8b8b8; border-bottom: 1px solid #c8c8c8; }
.status > span { height: 14px; padding-left: 4px; border-right: 1px solid #a8a8a8; }
.status .help { width: 165px; padding-left: 1px; }
.status .profile { width: 101px; }
.status .s1 { width: 87px; }
.status .s2 { width: 60px; }
.status .net { flex: 1; display: flex; align-items: center; gap: 32px; border-right: 0; }
.signal { width: 22px; height: 11px; }
.resize { width: 12px; height: 12px; align-self: flex-end; }
```
